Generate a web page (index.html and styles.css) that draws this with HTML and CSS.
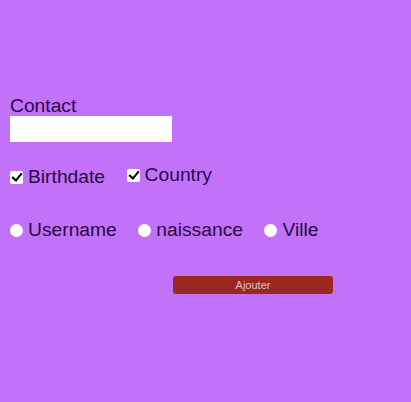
FILE: index.html
```html
<!DOCTYPE html>
<html lang="fr">
<head>
<meta charset="utf-8">
<title>Contact</title>
<link rel="stylesheet" href="styles.css">
</head>
<body>
<form class="form">
  <div class="field">
    <label class="field-label" for="contact">Contact</label>
    <input class="text-input" id="contact" type="text">
  </div>
  <div class="row checks">
    <label class="opt opt-low"><input class="check" type="checkbox" checked><span>Birthdate</span></label>
    <label class="opt opt-high"><input class="check" type="checkbox" checked><span>Country</span></label>
  </div>
  <div class="row radios">
    <label class="opt"><input class="radio" type="radio" name="r"><span>Username</span></label>
    <label class="opt"><input class="radio" type="radio" name="r"><span>naissance</span></label>
    <label class="opt"><input class="radio" type="radio" name="r"><span>Ville</span></label>
  </div>
  <div class="actions">
    <button class="btn" type="button">Ajouter</button>
  </div>
</form>
</body>
</html>
```
FILE: styles.css
```css
html, body {
  margin: 0;
  padding: 0;
  background: #c272f8;
  height: 100%;
}
body {
  font-family: "Liberation Sans", Arial, sans-serif;
  color: #2a0848;
}
.form {
  padding: 96px 10px 0 10px;
}
.field {
  display: flex;
  flex-direction: column;
  align-items: flex-start;
}
.field-label {
  font-size: 19.25px;
  line-height: 20px;
}
.text-input {
  width: 162px;
  height: 26px;
  box-sizing: border-box;
  border: none;
  margin: 0;
  padding: 0 4px;
  background: #fff;
  outline: none;
}
.row {
  display: flex;
  align-items: flex-start;
  gap: 21.5px;
  font-size: 19.25px;
  line-height: 22px;
}
.checks {
  margin-top: 22px;
}
.radios {
  margin-top: 31px;
}
.opt {
  display: flex;
  align-items: center;
  gap: 5px;
}
.opt-low {
  margin-top: 2px;
}
.check, .radio {
  appearance: none;
  -webkit-appearance: none;
  width: 13px;
  height: 13px;
  margin: 0;
  background: #fff;
  border: none;
  position: relative;
  flex: none;
}
.check {
  border-radius: 2px;
}
.check:checked::after {
  content: "";
  position: absolute;
  left: 4px;
  top: 0px;
  width: 4px;
  height: 8px;
  border: solid #000;
  border-width: 0 2.5px 2.5px 0;
  transform: rotate(40deg);
}
.radio {
  border-radius: 50%;
}
.actions {
  display: flex;
  margin-top: 35px;
  padding-left: 163px;
}
.btn {
  width: 160px;
  height: 18px;
  border: none;
  border-radius: 3px;
  background: #9b2820;
  color: #dcc0d4;
  font-family: "Liberation Sans", Arial, sans-serif;
  font-size: 11px;
  padding: 0;
  line-height: 18px;
}
```
